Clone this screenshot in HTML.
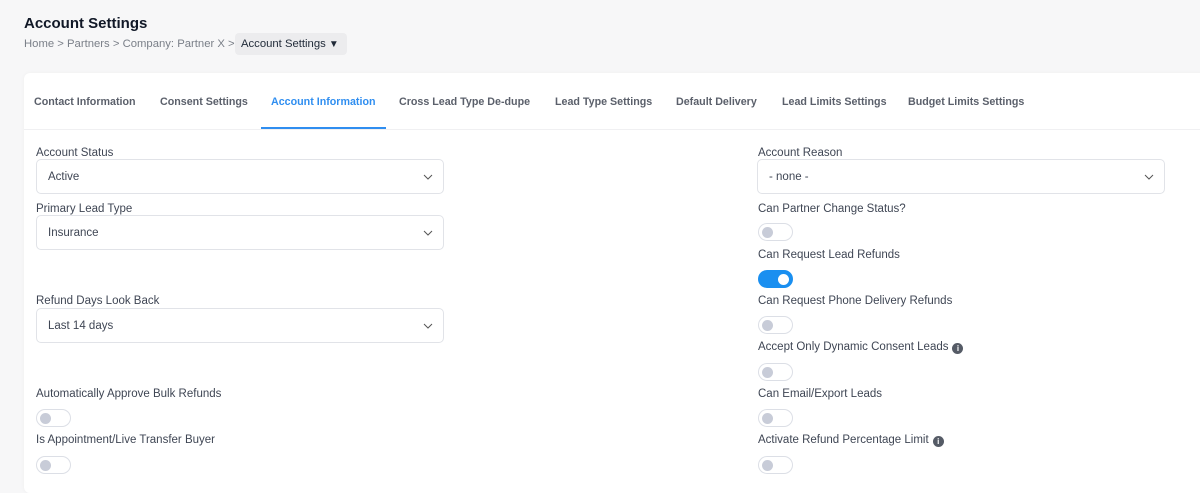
<!DOCTYPE html>
<html><head><style>
*{box-sizing:border-box;margin:0;padding:0}
body{width:1200px;height:478px;overflow:hidden;background:#f7f7f8;font-family:"Liberation Sans",sans-serif;color:#3f4654;position:relative}
h1{position:absolute;left:24px;top:15px;font-size:15px;font-weight:bold;color:#111827}
.bc{position:absolute;left:24px;top:38px;font-size:11.3px;color:#7a7f88}
.bcb{position:absolute;left:235px;top:33px;height:22px;width:112px;background:#ececee;border-radius:4px;font-size:11.3px;color:#1f2937;padding:5px 0 0 6px}
.card{position:absolute;left:24px;top:73px;width:1190px;height:420px;background:#fff;border-radius:6px;box-shadow:0 0 4px rgba(0,0,0,.04)}
.tabs{position:absolute;left:0;top:0;right:0;height:57px;border-bottom:1px solid #f0f0f2}
.tab{position:absolute;top:23px;font-size:10.7px;font-weight:bold;color:#5b606b}
.tab.a{color:#2f8ef0}
.ul{position:absolute;left:237px;top:54px;width:125px;height:2px;background:#2f8ef0}
.lbl{position:absolute;font-size:11.5px;color:#3f4654;margin-top:2px}
.sel{position:absolute;width:408px;height:35px;border:1px solid #e1e3e8;border-radius:5px;font-size:11.5px;color:#3f4654;padding:11px 0 0 11px}
.sel svg{position:absolute;right:10px;top:13px}
.tg{position:absolute;width:35px;height:18px;border:1px solid #dcdfe6;border-radius:9px;background:#fff}
.tg::after{content:"";position:absolute;left:3px;top:3px;width:11px;height:11px;border-radius:50%;background:#c8ccd8}
.tg.on{background:#1a8ff0;border-color:#1a8ff0}
.tg.on::after{left:19px;background:#fff}
.i{display:inline-block;width:11px;height:11px;border-radius:50%;background:#555b66;color:#fff;font-size:8px;text-align:center;line-height:11px;font-weight:bold;vertical-align:-1px;margin-left:4px}
</style></head><body>
<h1>Account Settings</h1>
<div class="bc">Home &gt; Partners &gt; Company: Partner X &gt;</div>
<div class="bcb">Account Settings <span style="font-size:10px">▼</span></div>
<div class="card">
<div class="tabs">
<div class="tab" style="left:10px">Contact Information</div>
<div class="tab" style="left:136px">Consent Settings</div>
<div class="tab a" style="left:247px">Account Information</div>
<div class="tab" style="left:375px">Cross Lead Type De-dupe</div>
<div class="tab" style="left:531px">Lead Type Settings</div>
<div class="tab" style="left:652px">Default Delivery</div>
<div class="tab" style="left:758px">Lead Limits Settings</div>
<div class="tab" style="left:884px">Budget Limits Settings</div>
<div class="ul"></div>
</div>
</div>
<div class="lbl" style="left:36px;top:145px">Account Status</div>
<div class="sel" style="left:36px;top:159px">Active<svg width="10" height="8"><path d="M1 2l4 4 4-4" stroke="#555" fill="none"/></svg></div>
<div class="lbl" style="left:36px;top:201px">Primary Lead Type</div>
<div class="sel" style="left:36px;top:215px">Insurance<svg width="10" height="8"><path d="M1 2l4 4 4-4" stroke="#555" fill="none"/></svg></div>
<div class="lbl" style="left:36px;top:293px">Refund Days Look Back</div>
<div class="sel" style="left:36px;top:308px">Last 14 days<svg width="10" height="8"><path d="M1 2l4 4 4-4" stroke="#555" fill="none"/></svg></div>
<div class="lbl" style="left:36px;top:386px">Automatically Approve Bulk Refunds</div>
<div class="tg" style="left:36px;top:409px"></div>
<div class="lbl" style="left:36px;top:432px">Is Appointment/Live Transfer Buyer</div>
<div class="tg" style="left:36px;top:456px"></div>

<div class="lbl" style="left:758px;top:145px">Account Reason</div>
<div class="sel" style="left:757px;top:159px">- none -<svg width="10" height="8"><path d="M1 2l4 4 4-4" stroke="#555" fill="none"/></svg></div>
<div class="lbl" style="left:758px;top:201px">Can Partner Change Status?</div>
<div class="tg" style="left:758px;top:223px"></div>
<div class="lbl" style="left:758px;top:247px">Can Request Lead Refunds</div>
<div class="tg on" style="left:758px;top:270px"></div>
<div class="lbl" style="left:758px;top:293px">Can Request Phone Delivery Refunds</div>
<div class="tg" style="left:758px;top:316px"></div>
<div class="lbl" style="left:758px;top:339px">Accept Only Dynamic Consent Leads<span class="i">i</span></div>
<div class="tg" style="left:758px;top:363px"></div>
<div class="lbl" style="left:758px;top:386px">Can Email/Export Leads</div>
<div class="tg" style="left:758px;top:409px"></div>
<div class="lbl" style="left:758px;top:432px">Activate Refund Percentage Limit<span class="i">i</span></div>
<div class="tg" style="left:758px;top:456px"></div>
</body></html>
